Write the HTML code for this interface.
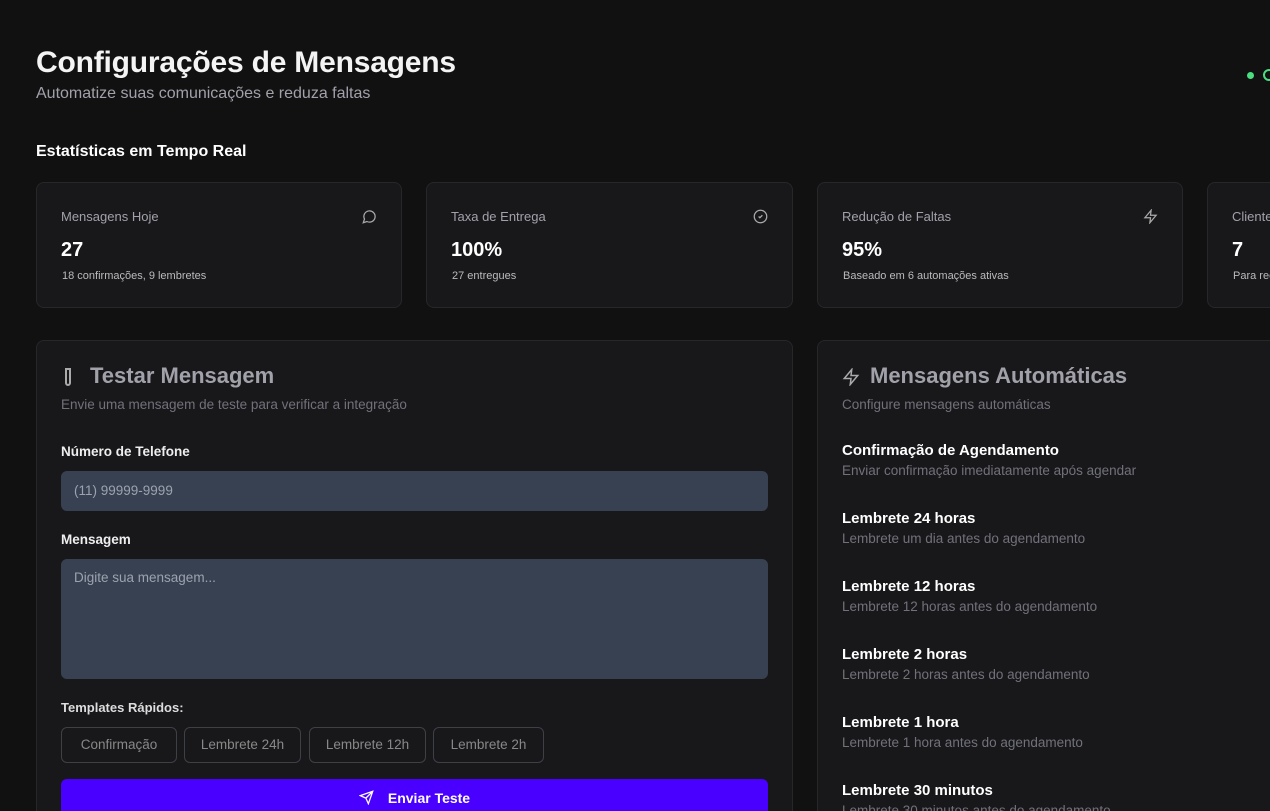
<html style="overflow:hidden;width:1270px;height:811px"><head><style>
*{box-sizing:border-box;margin:0;padding:0}
body{width:1270px;height:811px;overflow:hidden;background:#111112;font-family:"Liberation Sans",sans-serif;color:#fff;position:relative}
.abs{position:absolute}
.card{position:absolute;background:#18181b;border:1px solid #27272a;border-radius:8px}
.sl{position:absolute;left:24px;top:26px;font-size:13px;color:#a1a1aa}
.sv{position:absolute;left:24px;top:56px;font-size:20px;font-weight:bold}
.ss{position:absolute;left:25px;top:87px;font-size:11px;color:#bbb}
.ic{position:absolute;right:24px;top:26px}
.t{font-size:15px;font-weight:bold;color:#fff}
.d{font-size:13.5px;color:#71717a}
.btn{position:absolute;top:386px;height:36px;border:1px solid #3f3f46;border-radius:6px;color:#888;font-size:13.5px;line-height:34px;text-align:center}
</style></head><body>
<div class="abs" style="left:36px;top:46px;font-size:30px;font-weight:bold;color:#f4f4f5;letter-spacing:-0.2px">Configurações de Mensagens</div>
<div class="abs" style="left:36px;top:85px;font-size:16px;color:#a1a1aa">Automatize suas comunicações e reduza faltas</div>
<div class="abs" style="left:1247px;top:72px;width:7px;height:7px;border-radius:50%;background:#4ade80"></div>
<div class="abs" style="left:1263px;top:69px;width:12px;height:12px;border-radius:50%;border:2px solid #4ade80"></div>
<div class="abs" style="left:36px;top:143px;font-size:16px;font-weight:bold">Estatísticas em Tempo Real</div>

<div class="card" style="left:36px;top:182px;width:366px;height:126px">
<div class="sl">Mensagens Hoje</div>
<svg class="ic" width="15" height="15" viewBox="0 0 24 24" fill="none" stroke="#aaa" stroke-width="2"><path d="M7.9 20A9 9 0 1 0 4 16.1L2 22Z"/></svg>
<div class="sv">27</div><div class="ss">18 confirmações, 9 lembretes</div></div>
<div class="card" style="left:426px;top:182px;width:367px;height:126px">
<div class="sl">Taxa de Entrega</div>
<svg class="ic" width="15" height="15" viewBox="0 0 24 24" fill="none" stroke="#aaa" stroke-width="2"><circle cx="12" cy="12" r="10"/><path d="m9 12 2 2 4-4"/></svg>
<div class="sv">100%</div><div class="ss">27 entregues</div></div>
<div class="card" style="left:817px;top:182px;width:366px;height:126px">
<div class="sl">Redução de Faltas</div>
<svg class="ic" width="15" height="15" viewBox="0 0 24 24" fill="none" stroke="#aaa" stroke-width="2"><path d="M13 2 3 14h9l-1 8 10-12h-9l1-8z"/></svg>
<div class="sv">95%</div><div class="ss">Baseado em 6 automações ativas</div></div>
<div class="card" style="left:1207px;top:182px;width:366px;height:126px">
<div class="sl">Clientes</div>
<div class="sv">7</div><div class="ss">Para receber</div></div>

<div class="card" style="left:36px;top:340px;width:757px;height:500px">
<svg class="abs" style="left:24px;top:26px" width="14" height="20" viewBox="0 0 14 20" fill="none" stroke="#aaa" stroke-width="2"><path d="M4 2h6M5 2v14a2 2 0 0 0 4 0V2"/></svg>
<div class="abs" style="left:53px;top:22px;font-size:22px;font-weight:bold;color:#a1a1aa">Testar Mensagem</div>
<div class="abs d" style="left:24px;top:56px">Envie uma mensagem de teste para verificar a integração</div>
<div class="abs" style="left:24px;top:103px;font-size:13.5px;font-weight:bold;color:#eee">Número de Telefone</div>
<div class="abs" style="left:24px;top:130px;width:707px;height:40px;background:#374151;border-radius:6px;padding:12px 13px;font-size:13.5px;color:#9ca3af">(11) 99999-9999</div>
<div class="abs" style="left:24px;top:191px;font-size:13.5px;font-weight:bold;color:#eee">Mensagem</div>
<div class="abs" style="left:24px;top:218px;width:707px;height:120px;background:#374151;border-radius:6px;padding:11px 13px;font-size:13.5px;color:#9ca3af">Digite sua mensagem...</div>
<div class="abs" style="left:24px;top:359px;font-size:13px;font-weight:bold;color:#ddd">Templates Rápidos:</div>
<div class="btn" style="left:24px;width:116px">Confirmação</div>
<div class="btn" style="left:147px;width:117px">Lembrete 24h</div>
<div class="btn" style="left:272px;width:117px">Lembrete 12h</div>
<div class="btn" style="left:396px;width:111px">Lembrete 2h</div>
<div class="abs" style="left:24px;top:438px;width:707px;height:40px;background:#4a00ff;border-radius:6px;text-align:center;line-height:38px;font-size:14px;font-weight:bold">
<svg width="15" height="15" viewBox="0 0 24 24" fill="none" stroke="#fff" stroke-width="2" style="vertical-align:-2px;margin-right:14px"><path d="M22 2 11 13M22 2l-7 20-4-9-9-4Z"/></svg>Enviar Teste</div>
</div>

<div class="card" style="left:817px;top:340px;width:500px;height:500px">
<svg class="abs" style="left:24px;top:27px" width="18" height="18" viewBox="0 0 24 24" fill="none" stroke="#aaa" stroke-width="2"><path d="M13 2 3 14h9l-1 8 10-12h-9l1-8z"/></svg>
<div class="abs" style="left:52px;top:22px;font-size:22px;font-weight:bold;color:#a1a1aa">Mensagens Automáticas</div>
<div class="abs d" style="left:24px;top:56px">Configure mensagens automáticas</div>
<div class="abs" style="left:24px;top:101px"><div class="t">Confirmação de Agendamento</div><div class="d" style="margin-top:4px">Enviar confirmação imediatamente após agendar</div></div>
<div class="abs" style="left:24px;top:169px"><div class="t">Lembrete 24 horas</div><div class="d" style="margin-top:4px">Lembrete um dia antes do agendamento</div></div>
<div class="abs" style="left:24px;top:237px"><div class="t">Lembrete 12 horas</div><div class="d" style="margin-top:4px">Lembrete 12 horas antes do agendamento</div></div>
<div class="abs" style="left:24px;top:305px"><div class="t">Lembrete 2 horas</div><div class="d" style="margin-top:4px">Lembrete 2 horas antes do agendamento</div></div>
<div class="abs" style="left:24px;top:373px"><div class="t">Lembrete 1 hora</div><div class="d" style="margin-top:4px">Lembrete 1 hora antes do agendamento</div></div>
<div class="abs" style="left:24px;top:441px"><div class="t">Lembrete 30 minutos</div><div class="d" style="margin-top:4px">Lembrete 30 minutos antes do agendamento</div></div>
</div>
</body></html>
